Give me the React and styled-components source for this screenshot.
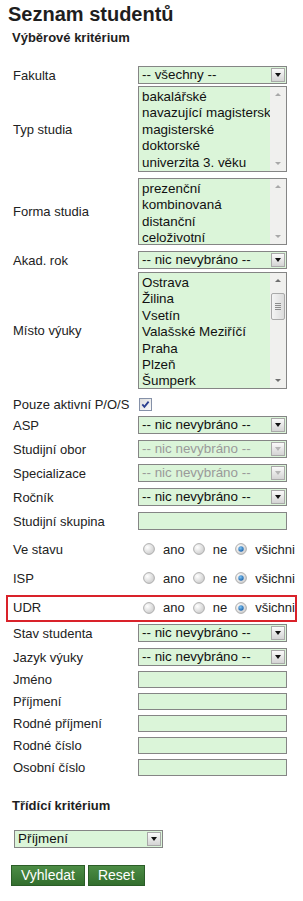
import React from "react";
import styled, { createGlobalStyle } from "styled-components";

const GlobalStyle = createGlobalStyle`
  body {
    margin: 0;
    background: #fff;
    font-family: "Liberation Sans", Arial, sans-serif;
    color: #222;
  }
`;

const Page = styled.div`
  width: 303px;
  padding: 2px 0 20px 8px;
  box-sizing: border-box;
`;

const Title = styled.h1`
  margin: 0;
  font-size: 20px;
  line-height: 24px;
  font-weight: bold;
  color: #1e1e1e;
`;

const SectionTitle = styled.h2`
  margin: ${(p) => p.$mt}px 0 0 4px;
  font-size: 13px;
  line-height: 16px;
  font-weight: bold;
  color: #1e1e1e;
`;

const Form = styled.div`
  display: flex;
  flex-direction: column;
`;

const Row = styled.div`
  display: flex;
  align-items: center;
  height: ${(p) => p.$h || 18}px;
  margin-top: ${(p) => p.$mt || 0}px;
`;

const HighlightRow = styled.div`
  display: flex;
  align-items: center;
  box-sizing: border-box;
  width: 291px;
  height: 27px;
  margin: ${(p) => p.$mt}px 0 0 -2px;
  padding-bottom: 2px;
  border: 2px solid #d9222a;
`;

const Label = styled.div`
  width: 125px;
  margin-left: 5px;
  font-size: 13px;
  color: #222;
  white-space: nowrap;
`;

const Field = styled.div`
  box-sizing: border-box;
  width: ${(p) => p.$w || 149}px;
  height: ${(p) => p.$h || 18}px;
  border: 1px solid #858585;
  background: #dbf5d9;
  display: flex;
  font-size: 13.4px;
  color: ${(p) => (p.$disabled ? "#9a9a9a" : "#111")};
`;

const SelectText = styled.div`
  flex: 1;
  padding-left: 3px;
  line-height: 16px;
  white-space: nowrap;
  overflow: hidden;
`;

const SelectButton = styled.div`
  width: 14px;
  margin: 1px;
  box-sizing: border-box;
  border: 1px solid #a9a9a9;
  background: linear-gradient(#fafafa, #d4d4d4);
  display: flex;
  align-items: center;
  justify-content: center;

  &::after {
    content: "";
    border-left: 3.5px solid transparent;
    border-right: 3.5px solid transparent;
    border-top: 4px solid ${(p) => (p.$disabled ? "#b5b5b5" : "#111")};
  }
`;

const ListItems = styled.div`
  flex: 1;
  padding: 2px 0 0 3px;
  line-height: 16.4px;
  white-space: nowrap;
  overflow: hidden;
`;

const ScrollTrack = styled.div`
  position: relative;
  width: 16px;
  background: #f0f0ee;
  display: flex;
  flex-direction: column;
  justify-content: space-between;
  align-items: center;
  padding: 6px 0;
  box-sizing: border-box;
`;

const Arrow = styled.div`
  width: 0;
  height: 0;
  border-left: 3px solid transparent;
  border-right: 3px solid transparent;
  ${(p) =>
    p.$up
      ? `border-bottom: 3px solid ${p.$active ? "#6f6f6f" : "#a8a8a8"};`
      : `border-top: 3px solid ${p.$active ? "#6f6f6f" : "#a8a8a8"};`}
`;

const Thumb = styled.div`
  position: absolute;
  top: 20px;
  left: 1px;
  width: 14px;
  height: 27px;
  box-sizing: border-box;
  border: 1px solid #a9a9a9;
  border-radius: 2px;
  background: linear-gradient(90deg, #f4f4f4, #dcdcdc);
  display: flex;
  flex-direction: column;
  align-items: center;
  justify-content: center;
  gap: 1px;

  span {
    width: 6px;
    height: 1px;
    background: #8c8c8c;
  }
`;

const RadioGroup = styled.div`
  display: flex;
  align-items: center;
  margin-left: 5px;
  font-size: 13px;
  color: #222;
`;

const RadioText = styled.span`
  margin: 0 8px 0 8px;
  &:last-child {
    margin-right: 0;
  }
`;

const SortTitle = styled.h2`
  margin: 22px 0 0 4px;
  font-size: 13px;
  line-height: 16px;
  font-weight: bold;
  color: #1e1e1e;
`;

const SortRow = styled.div`
  margin: 16px 0 0 6px;
`;

const Buttons = styled.div`
  display: flex;
  gap: 3px;
  margin: 17px 0 0 3px;
`;

const Button = styled.button`
  height: 21px;
  padding: 0 9px;
  border: 1px solid #2b5d27;
  background: linear-gradient(#4c8c45, #336f2e);
  color: #fff;
  font-family: "Liberation Sans", Arial, sans-serif;
  font-size: 14px;
  line-height: 19px;
  cursor: pointer;
`;

const Select = ({ value, disabled, width }) => (
  <Field $disabled={disabled} $w={width}>
    <SelectText>{value}</SelectText>
    <SelectButton $disabled={disabled} />
  </Field>
);

const ListBox = ({ items, height, scroll }) => (
  <Field $h={height}>
    <ListItems>
      {items.map((it) => (
        <div key={it}>{it}</div>
      ))}
    </ListItems>
    <ScrollTrack>
      <Arrow $up $active={scroll} />
      {scroll && (
        <Thumb>
          <span />
          <span />
          <span />
          <span />
        </Thumb>
      )}
      <Arrow $active={scroll} />
    </ScrollTrack>
  </Field>
);

const Checkbox = () => (
  <svg width="13" height="13" viewBox="0 0 13 13" style={{ marginLeft: 1 }}>
    <defs>
      <linearGradient id="cb" x1="0" y1="0" x2="1" y2="1">
        <stop offset="0" stopColor="#dcdcdc" />
        <stop offset="1" stopColor="#fbfbfb" />
      </linearGradient>
    </defs>
    <rect x="0.5" y="0.5" width="12" height="12" fill="url(#cb)" stroke="#8591a8" />
    <path d="M3.3 6.4 L5.4 8.8 L9.6 3.6" fill="none" stroke="#2b3f8f" strokeWidth="1.8" />
  </svg>
);

const Radio = ({ checked }) => (
  <svg width="12" height="12" viewBox="0 0 12 12">
    <defs>
      <radialGradient id="rg" cx="0.35" cy="0.35" r="0.75">
        <stop offset="0" stopColor="#ffffff" />
        <stop offset="1" stopColor="#c9c9c9" />
      </radialGradient>
      <radialGradient id="rd" cx="0.4" cy="0.35" r="0.7">
        <stop offset="0" stopColor="#7ec3f2" />
        <stop offset="1" stopColor="#155da8" />
      </radialGradient>
    </defs>
    <circle cx="6" cy="6" r="5.4" fill="url(#rg)" stroke="#a7a7a7" strokeWidth="0.9" />
    {checked && <circle cx="6" cy="6" r="2.7" fill="url(#rd)" />}
  </svg>
);

const Radios = () => (
  <RadioGroup>
    <Radio />
    <RadioText>ano</RadioText>
    <Radio />
    <RadioText>ne</RadioText>
    <Radio checked />
    <RadioText>všichni</RadioText>
  </RadioGroup>
);

const none = "-- nic nevybráno --";

export default function App() {
  return (
    <>
      <GlobalStyle />
      <Page>
        <Title>Seznam studentů</Title>
        <SectionTitle $mt={4}>Výběrové kritérium</SectionTitle>
        <Form>
          <Row $mt={20}>
            <Label>Fakulta</Label>
            <Select value="-- všechny --" />
          </Row>
          <Row $mt={2} $h={86}>
            <Label>Typ studia</Label>
            <ListBox
              height={86}
              items={[
                "bakalářské",
                "navazující magisterské",
                "magisterské",
                "doktorské",
                "univerzita 3. věku",
              ]}
            />
          </Row>
          <Row $mt={6} $h={67}>
            <Label>Forma studia</Label>
            <ListBox
              height={67}
              items={["prezenční", "kombinovaná", "distanční", "celoživotní"]}
            />
          </Row>
          <Row $mt={6}>
            <Label>Akad. rok</Label>
            <Select value={none} />
          </Row>
          <Row $mt={3} $h={117}>
            <Label>Místo výuky</Label>
            <ListBox
              height={117}
              scroll
              items={[
                "Ostrava",
                "Žilina",
                "Vsetín",
                "Valašské Meziříčí",
                "Praha",
                "Plzeň",
                "Šumperk",
              ]}
            />
          </Row>
          <Row $mt={7} $h={16}>
            <Label>Pouze aktivní P/O/S</Label>
            <Checkbox />
          </Row>
          <Row $mt={4}>
            <Label>ASP</Label>
            <Select value={none} />
          </Row>
          <Row $mt={6}>
            <Label>Studijní obor</Label>
            <Select value={none} disabled />
          </Row>
          <Row $mt={6}>
            <Label>Specializace</Label>
            <Select value={none} disabled />
          </Row>
          <Row $mt={6}>
            <Label>Ročník</Label>
            <Select value={none} />
          </Row>
          <Row $mt={6}>
            <Label>Studijní skupina</Label>
            <Field />
          </Row>
          <Row $mt={10}>
            <Label>Ve stavu</Label>
            <Radios />
          </Row>
          <Row $mt={11}>
            <Label>ISP</Label>
            <Radios />
          </Row>
          <HighlightRow $mt={8}>
            <Label>UDR</Label>
            <Radios />
          </HighlightRow>
          <Row $mt={2}>
            <Label>Stav studenta</Label>
            <Select value={none} />
          </Row>
          <Row $mt={6}>
            <Label>Jazyk výuky</Label>
            <Select value={none} />
          </Row>
          {["Jméno", "Příjmení", "Rodné příjmení", "Rodné číslo", "Osobní číslo"].map(
            (l) => (
              <Row key={l} $mt={5} $h={17}>
                <Label>{l}</Label>
                <Field $h={17} />
              </Row>
            )
          )}
        </Form>
        <SortTitle>Třídící kritérium</SortTitle>
        <SortRow>
          <Select value="Příjmení" />
        </SortRow>
        <Buttons>
          <Button>Vyhledat</Button>
          <Button>Reset</Button>
        </Buttons>
      </Page>
    </>
  );
}
